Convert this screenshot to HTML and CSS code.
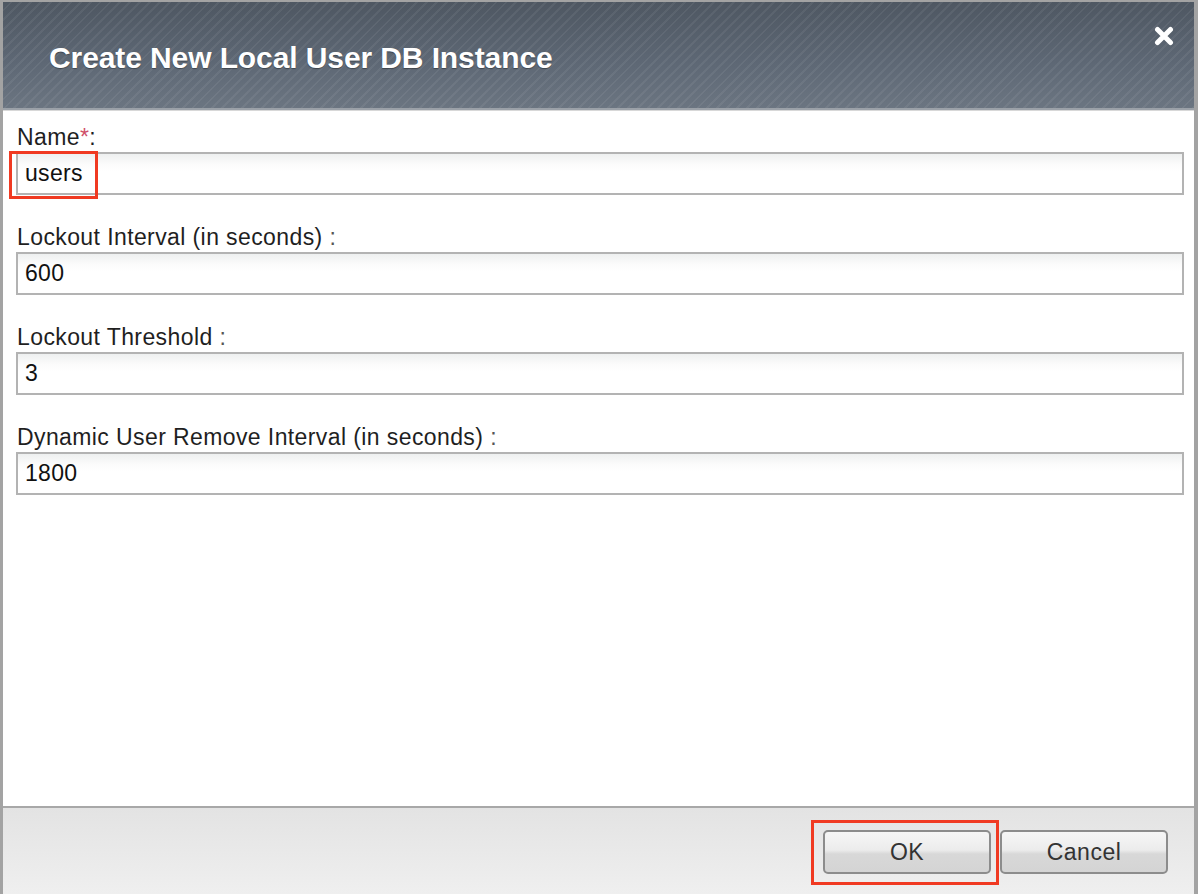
FILE: index.html
```html
<!DOCTYPE html>
<html>
<head>
<meta charset="utf-8">
<link rel="stylesheet" href="styles.css">
</head>
<body>
<div class="dialog">
  <div class="header">
    <div class="title">Create New Local User DB Instance</div>
    <div class="close">
      <svg width="20" height="20" viewBox="0 0 20 20"><path d="M3.5 3.5 L16.5 16.5 M16.5 3.5 L3.5 16.5" stroke="#fff" stroke-width="5" stroke-linecap="round"/></svg>
    </div>
  </div>
  <div class="body">
    <div class="field">
      <div class="label">Name<span class="req">*</span>:</div>
      <div class="input hl-wrap">users<span class="hl hl-name"></span></div>
    </div>
    <div class="field">
      <div class="label">Lockout Interval (in seconds) <span class="colon">:</span></div>
      <div class="input">600</div>
    </div>
    <div class="field">
      <div class="label">Lockout Threshold <span class="colon">:</span></div>
      <div class="input">3</div>
    </div>
    <div class="field">
      <div class="label">Dynamic User Remove Interval (in seconds) <span class="colon">:</span></div>
      <div class="input">1800</div>
    </div>
  </div>
  <div class="footer">
    <div class="btn hl-wrap">OK<span class="hl hl-ok"></span></div>
    <div class="btn">Cancel</div>
  </div>
</div>
</body>
</html>
```
FILE: styles.css
```css
html, body {
  margin: 0;
  padding: 0;
  background: #fff;
}
body {
  font-family: "Liberation Sans", Arial, sans-serif;
}
.dialog {
  width: 1198px;
  height: 894px;
  box-sizing: border-box;
  border-left: 3px solid #a3a3a3;
  border-right: 4px solid #a3a3a3;
  border-top: 2px solid #a3a3a3;
  display: flex;
  flex-direction: column;
  background: #fff;
}
.header {
  height: 108px;
  flex: none;
  box-sizing: border-box;
  border-bottom: 2px solid #9ba1a8;
  background:
    repeating-linear-gradient(135deg, rgba(255,255,255,0) 0px, rgba(255,255,255,0) 5px, rgba(255,255,255,0.06) 5px, rgba(255,255,255,0.06) 7px),
    linear-gradient(to bottom, #4e5762 0%, #5d6774 55%, #6b7581 100%);
  display: flex;
  align-items: flex-start;
  justify-content: space-between;
}
.title {
  color: #fff;
  font-weight: bold;
  font-size: 30px;
  margin-top: 39px;
  margin-left: 46px;
  letter-spacing: -0.1px;
  text-shadow: 0 1px 1px rgba(0,0,0,0.35);
}
.close {
  margin-top: 24px;
  margin-right: 20px;
  width: 20px;
  height: 20px;
}
.close svg {
  display: block;
}
.body {
  flex: 1;
  padding: 14px 10px 0 13px;
  border-top: 1px solid #d8d8d8;
}
.field {
  margin-bottom: 30px;
}
.label {
  font-size: 23px;
  line-height: 24px;
  letter-spacing: 0.4px;
  color: #1f1f1f;
  margin-left: 1px;
  margin-bottom: 3px;
  white-space: nowrap;
}
.req {
  color: #d0506a;
}
.colon {
  color: #555;
}
.input {
  height: 43px;
  box-sizing: border-box;
  border: 2px solid #b3b3b3;
  background: linear-gradient(to bottom, #eef0f0 0px, #fbfbfb 10px, #ffffff 18px);
  font-size: 23px;
  letter-spacing: 0.3px;
  line-height: 39px;
  padding-left: 7px;
  color: #111;
}
.hl-wrap {
  position: relative;
}
.hl {
  position: absolute;
  border: 3px solid #f03a22;
  box-sizing: border-box;
  pointer-events: none;
}
.hl-name {
  left: -9px;
  top: -3px;
  width: 89px;
  height: 48px;
}
.footer {
  height: 88px;
  flex: none;
  box-sizing: border-box;
  border-top: 2px solid #a8a8a8;
  background: linear-gradient(to bottom, #e3e3e3, #efefef);
  display: flex;
  justify-content: flex-end;
  align-items: flex-start;
  padding-top: 22px;
  padding-right: 26px;
  gap: 9px;
}
.btn {
  width: 168px;
  height: 44px;
  box-sizing: border-box;
  border: 2px solid #8c8c8c;
  border-radius: 5px;
  background: linear-gradient(to bottom, #f6f6f6 0%, #ececec 45%, #d8d8d8 55%, #d4d4d4 100%);
  font-size: 23px;
  letter-spacing: 0.5px;
  line-height: 40px;
  text-align: center;
  color: #333;
}
.hl-ok {
  left: -14px;
  top: -12px;
  width: 188px;
  height: 65px;
}
```
